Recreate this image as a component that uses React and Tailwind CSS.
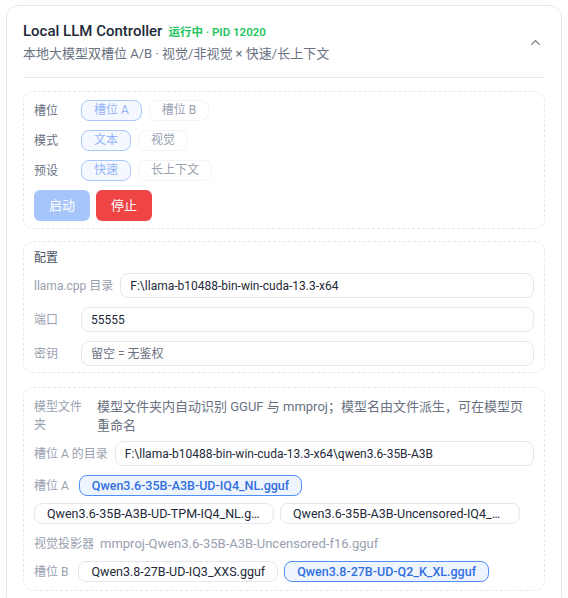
import { ChevronUp } from "lucide-react";

function Chip({ active, faded, children }) {
  let tone = "border-gray-200 bg-white text-gray-800 text-[12.5px]";
  if (faded) tone = active ? "border-[#a9c7fb] bg-[#f5f9ff] text-[#93b4f7] text-[12px]" : "border-gray-100 bg-white text-gray-400 text-[12px]";
  else if (active) tone = "border-[#4f8ef7] bg-[#eff5ff] text-[#2f6fe0] font-medium text-[12.5px]";
  return (
    <span
      className={`inline-flex h-[21px] max-w-[240px] items-center rounded-lg border px-3 whitespace-nowrap ${tone}`}
    >
      <span className="truncate leading-[19px]">{children}</span>
    </span>
  );
}

function PickRow({ label, options, active }) {
  return (
    <div className="flex items-center">
      <span className="w-[47px] shrink-0 text-[12px] text-gray-500">{label}</span>
      <div className="flex gap-[7px]">
        {options.map((o) => (
          <Chip key={o} faded active={o === active}>
            {o}
          </Chip>
        ))}
      </div>
    </div>
  );
}

function Field({ label, value, placeholder }) {
  return (
    <div className="flex items-center gap-[7px]">
      <span className="min-w-[40px] shrink-0 whitespace-nowrap text-[12px] text-gray-400">{label}</span>
      <input
        readOnly
        value={value}
        placeholder={placeholder}
        className="h-[25px] flex-1 rounded-lg border border-gray-200 px-[9px] text-[12px] text-gray-800 outline-none placeholder:text-gray-500"
      />
    </div>
  );
}

export default function App() {
  return (
    <div className="bg-white px-[6px] pt-[5px] pb-4 font-['Roboto','Noto_Sans_CJK_SC',sans-serif]">
      <div className="rounded-xl border border-gray-200 px-4 pt-[14px] pb-4">
        <div className="flex items-center justify-between border-b border-gray-200 pb-[13px]">
          <div className="flex flex-col gap-[2px]">
            <div className="flex items-baseline gap-[6px]">
              <h1 className="text-[15px] leading-[22px] font-medium text-gray-800">Local LLM Controller</h1>
              <span className="text-[11.5px] font-semibold text-[#22c55e]">运行中 · PID 12020</span>
            </div>
            <p className="text-[13px] leading-[20px] text-gray-500">
              本地大模型双槽位 A/B · 视觉/非视觉 × 快速/长上下文
            </p>
          </div>
          <ChevronUp size={15} strokeWidth={2} className="mr-[2px] text-gray-500" />
        </div>

        <div className="flex flex-col gap-3 pt-[13px]">
          <div className="flex flex-col gap-[9px] rounded-[10px] border border-dashed border-gray-200 px-[10px] pt-[8px] pb-[7px]">
            <PickRow label="槽位" options={["槽位 A", "槽位 B"]} active="槽位 A" />
            <PickRow label="模式" options={["文本", "视觉"]} active="文本" />
            <PickRow label="预设" options={["快速", "长上下文"]} active="快速" />
            <div className="flex gap-[6px]">
              <button className="h-[31px] w-[56px] rounded-md bg-[#a6c5fb] text-[13px] text-white">启动</button>
              <button className="h-[31px] w-[56px] rounded-md bg-[#ef4444] text-[13px] text-white">停止</button>
            </div>
          </div>

          <div className="flex flex-col gap-[9px] rounded-[10px] border border-dashed border-gray-200 px-[10px] pt-[6px] pb-[6px]">
            <div className="-mb-[4px] text-[12px] leading-[20px] text-gray-600">配置</div>
            <Field label="llama.cpp 目录" value="F:\llama-b10488-bin-win-cuda-13.3-x64" />
            <Field label="端口" value="55555" />
            <Field label="密钥" value="" placeholder="留空 = 无鉴权" />
          </div>

          <div className="mt-[2px] flex flex-col rounded-[10px] border border-dashed border-gray-200 px-[10px] pt-[9px] pb-[8px]">
            <div className="flex items-start gap-[7px]">
              <span className="w-[56px] shrink-0 pt-[1px] text-[12px] leading-[18px] text-gray-400">模型文件夹</span>
              <p className="flex-1 text-[13px] leading-[19px] text-gray-500">
                模型文件夹内自动识别 GGUF 与 mmproj；模型名由文件派生，可在模型页重命名
              </p>
            </div>
            <div className="mt-[6px]">
              <Field label="槽位 A 的目录" value="F:\llama-b10488-bin-win-cuda-13.3-x64\qwen3.6-35B-A3B" />
            </div>
            <div className="mt-[9px] flex flex-wrap items-center gap-x-[6px] gap-y-[7px]">
              <span className="mr-[4px] text-[12px] text-gray-400">槽位 A</span>
              <Chip active>Qwen3.6-35B-A3B-UD-IQ4_NL.gguf</Chip>
              <Chip>Qwen3.6-35B-A3B-UD-TPM-IQ4_NL.gguf</Chip>
              <Chip>Qwen3.6-35B-A3B-Uncensored-IQ4_NL.gguf</Chip>
            </div>
            <div className="mt-[10px] flex items-center gap-[6px] leading-[20px] text-gray-400">
              <span className="text-[12px]">视觉投影器</span>
              <span className="text-[13px]">mmproj-Qwen3.6-35B-A3B-Uncensored-f16.gguf</span>
            </div>
            <div className="mt-[7px] flex flex-wrap items-center gap-x-[6px] gap-y-[7px]">
              <span className="mr-[4px] text-[12px] text-gray-400">槽位 B</span>
              <Chip>Qwen3.8-27B-UD-IQ3_XXS.gguf</Chip>
              <Chip active>Qwen3.8-27B-UD-Q2_K_XL.gguf</Chip>
            </div>
          </div>
        </div>
      </div>
    </div>
  );
}
